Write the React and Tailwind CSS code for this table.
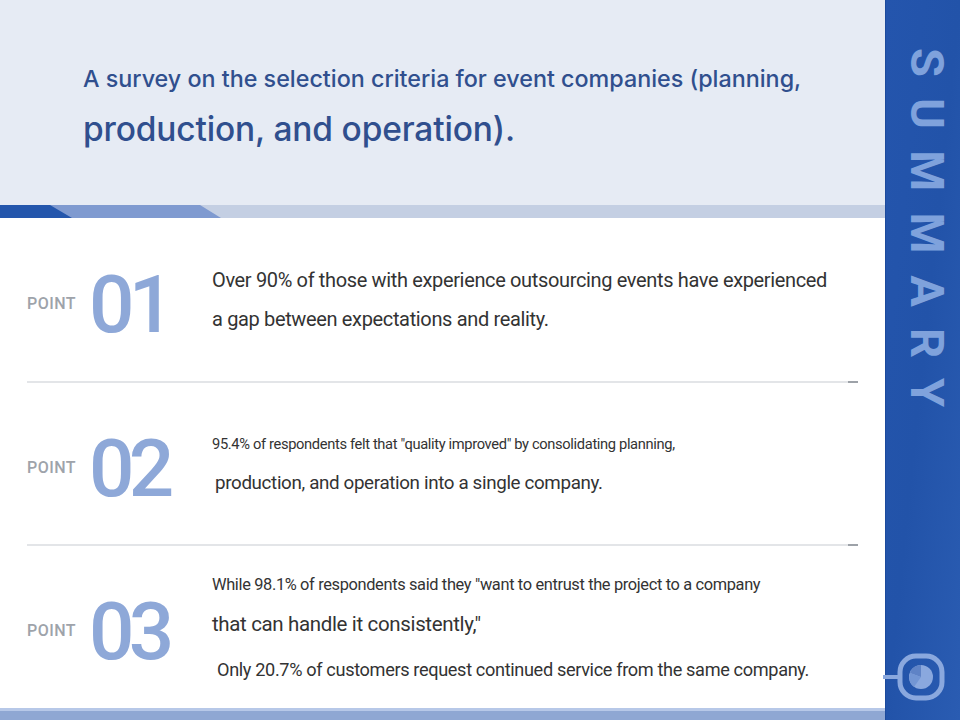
import React from 'react';

const POINTS = [
  {
    no: '01',
    h: 'h-[165px]',
    lines: [
      { t: 'Over 90% of those with experience outsourcing events have experienced', c: 'text-[20px]' },
      { t: 'a gap between expectations and reality.', c: 'text-[20px] mt-[13px]' },
    ],
  },
  {
    no: '02',
    h: 'h-[163px]',
    lines: [
      { t: '95.4% of respondents felt that "quality improved" by consolidating planning,', c: 'text-[14.7px]' },
      { t: 'production, and operation into a single company.', c: 'text-[18.8px] mt-[13px] pl-[3px]' },
    ],
  },
  {
    no: '03',
    h: 'h-[162px]',
    lines: [
      { t: 'While 98.1% of respondents said they "want to entrust the project to a company', c: 'text-[16.4px]' },
      { t: 'that can handle it consistently,"', c: 'text-[20.5px] mt-[13px]' },
      { t: 'Only 20.7% of customers request continued service from the same company.', c: 'text-[18.15px] mt-[20px] pl-[5px]' },
    ],
  },
];

function PointRow({ item, last }) {
  return (
    <div className={`relative flex items-center ${item.h} ${last ? '' : 'border-b-2 border-[#e3e5e8]'}`}>
      <div className="w-[65px] pt-[8px] text-[16px] font-medium tracking-[0.03em] text-[#9ea3aa]">POINT</div>
      <div className="ml-[-3px] w-[123px] pt-[10px] text-[80px] font-medium leading-none tracking-[-0.07em] text-[#8ea8d8]">
        {item.no}
      </div>
      <div className="flex flex-col text-[#333333] tracking-[-0.022em]">
        {item.lines.map((l) => (
          <div key={l.t} className={`${l.c} leading-[26px] whitespace-pre`}>
            {l.t}
          </div>
        ))}
      </div>
      {!last && <div className="absolute right-[-3px] bottom-[-2px] h-[2px] w-[10px] bg-[#9da2a8]" />}
    </div>
  );
}

export default function App() {
  return (
    <div className="flex h-[720px] w-[960px] overflow-hidden [font-family:'Roboto',sans-serif]">
      <div className="flex w-[885px] flex-col">
        <header className="h-[205px] bg-[#e6ebf4] pl-[83px] pt-[62px] text-[#304f8e] [font-family:'Inter',sans-serif]">
          <h1 className="text-[23.3px] font-medium leading-[34px]">
            A survey on the selection criteria for event companies (planning,
          </h1>
          <p className="mt-[13px] text-[33.5px] font-medium leading-[40px] tracking-[-0.005em]">
            production, and operation).
          </p>
        </header>

        <svg width="885" height="13" viewBox="0 0 885 13" className="block">
          <rect width="885" height="13" fill="#c4cfe3" />
          <polygon points="0,0 200,0 221,13 0,13" fill="#7f9ad0" />
          <polygon points="0,0 50,0 72,13 0,13" fill="#2456ac" />
        </svg>

        <main className="flex-1 bg-white pl-[27px] pr-[30px]">
          {POINTS.map((p, i) => (
            <PointRow key={p.no} item={p} last={i === POINTS.length - 1} />
          ))}
        </main>

        <div className="h-[3px] bg-[#b7c8e8]" />
        <div className="h-[9px] bg-[#8fa7d3]" />
      </div>

      <aside className="relative flex w-[75px] flex-col items-center border-l border-[#1c4a9c] bg-gradient-to-br from-[#2455ad] via-[#2253a9] to-[#2a5cb2]">
        <div className="mt-[48px] ml-[8px] text-[47px] font-bold leading-none tracking-[0.45em] text-[#7fa2dc] [writing-mode:vertical-rl]">
          SUMMARY
        </div>
        <svg width="80" height="50" viewBox="0 0 80 50" className="absolute left-[-3px] top-[652px]">
          <line x1="0" y1="25" x2="18" y2="25" stroke="#8aa8de" strokeWidth="4" />
          <rect x="17" y="4" width="42" height="42" rx="16" fill="none" stroke="#8aa8de" strokeWidth="5" />
          <circle cx="38" cy="25" r="12" fill="#8aa8de" />
          <path d="M38 25 L38 13 A12 12 0 0 0 27 21 Z" fill="#5f83c6" />
          <path d="M38 25 L27 21 A12 12 0 0 0 31 35 Z" fill="#7396d4" />
        </svg>
      </aside>
    </div>
  );
}
